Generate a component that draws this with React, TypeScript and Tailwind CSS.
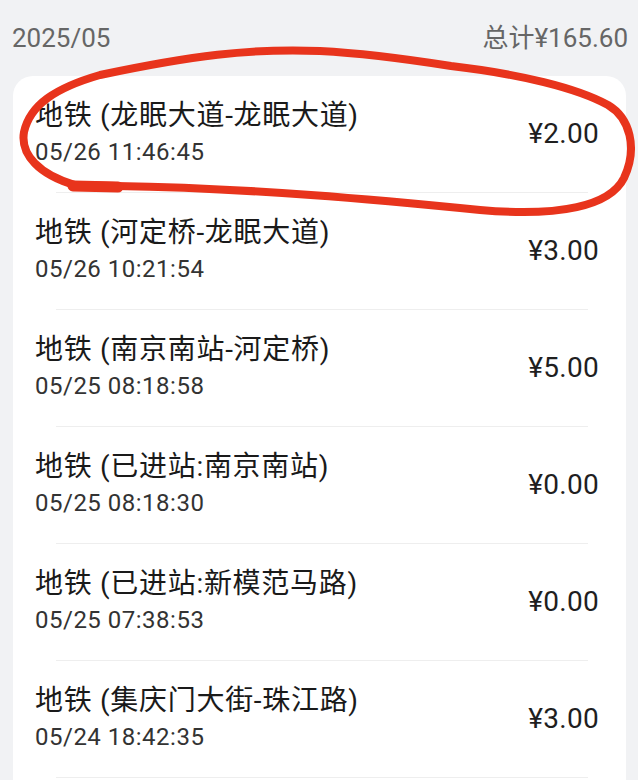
const records = [
  { title: "地铁 (龙眠大道-龙眠大道)", time: "05/26 11:46:45", amount: "¥2.00" },
  { title: "地铁 (河定桥-龙眠大道)", time: "05/26 10:21:54", amount: "¥3.00" },
  { title: "地铁 (南京南站-河定桥)", time: "05/25 08:18:58", amount: "¥5.00" },
  { title: "地铁 (已进站:南京南站)", time: "05/25 08:18:30", amount: "¥0.00" },
  { title: "地铁 (已进站:新模范马路)", time: "05/25 07:38:53", amount: "¥0.00" },
  { title: "地铁 (集庆门大街-珠江路)", time: "05/24 18:42:35", amount: "¥3.00" },
];

const font = { fontFamily: '"Roboto", "Noto Sans CJK SC", sans-serif' };

function Row({ title, time, amount }: { title: string; time: string; amount: string }) {
  return (
    <div>
      <div className="flex h-[116px] items-center justify-between pl-[22px] pr-[27px]">
        <div className="flex flex-col">
          <span className="text-[28px] leading-[36px] tracking-[0.7px] text-[#1a1a1a]">{title}</span>
          <span className="text-[24px] leading-[36px] tracking-[0.5px] text-[#333333]">{time}</span>
        </div>
        <span className="text-[28px] leading-[36px] tracking-[0.3px] text-[#1f1f1f]">{amount}</span>
      </div>
      <div className="ml-[43px] mr-[38px] h-px bg-[#eeeeee]" />
    </div>
  );
}

export default function App() {
  return (
    <div className="relative min-h-screen overflow-hidden bg-[#f1f2f4]" style={font}>
      <div className="flex h-[76px] items-center justify-between pl-[12px] pr-[10px] text-[26px] text-[#666666]">
        <span>2025/05</span>
        <span>总计¥165.60</span>
      </div>

      <div className="ml-[13px] mr-[12px] rounded-[20px] bg-white pb-[60px]">
        {records.map((r) => (
          <Row key={r.time} {...r} />
        ))}
      </div>

      {/* hand-drawn highlight around the first record */}
      <svg
        className="pointer-events-none absolute left-0 top-0"
        width="638"
        height="780"
        viewBox="0 0 638 780"
        fill="none"
      >
        <path
          d="M75 185 L116 186 C250 188 380 200 480 210 C560 217 610 206 624 178 C638 148 630 118 608 105 C577 88 520 74 451 66 C400 58 360 53 320 51 C250 48 190 56 100 75 C55 88 30 105 24 132 C20 155 40 175 75 185"
          stroke="#e8341c"
          strokeWidth="8"
          strokeLinecap="round"
          strokeLinejoin="round"
        />
        <path d="M73 186 L118 187" stroke="#e8341c" strokeWidth="11" strokeLinecap="round" />
      </svg>
    </div>
  );
}
